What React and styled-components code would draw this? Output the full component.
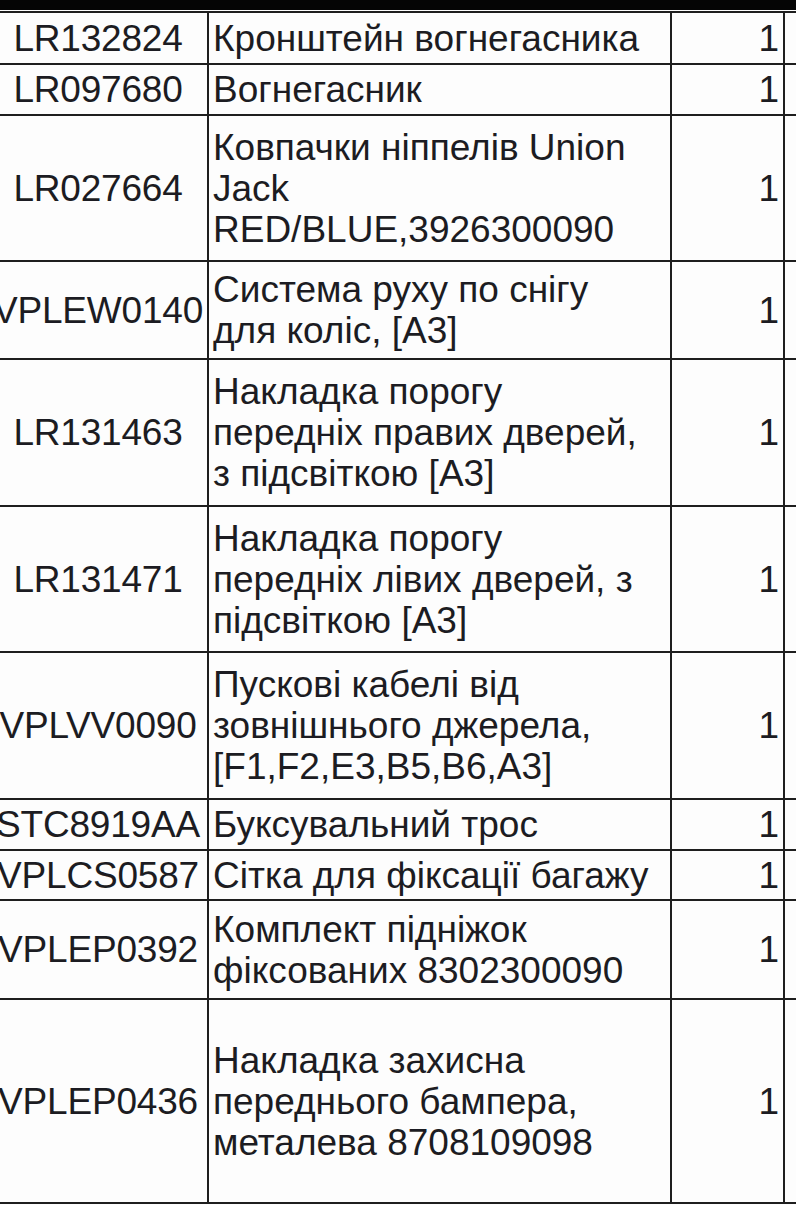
import React from 'react';
import styled, { createGlobalStyle } from 'styled-components';

const GlobalStyle = createGlobalStyle`
  html, body {
    margin: 0;
    padding: 0;
    background: #fdfdfd;
    overflow: hidden;
  }
`;

const columns = [220, 463, 113, 60];

const rows = [
  { code: 'LR132824', lines: ['Кронштейн вогнегасника'], qty: 1, h: 52 },
  { code: 'LR097680', lines: ['Вогнегасник'], qty: 1, h: 51 },
  { code: 'LR027664', lines: ['Ковпачки ніппелів Union', 'Jack', 'RED/BLUE,3926300090'], qty: 1, h: 146 },
  { code: 'VPLEW0140', lines: ['Система руху по снігу', 'для коліс, [A3]'], qty: 1, h: 98 },
  { code: 'LR131463', lines: ['Накладка порогу', 'передніх правих дверей,', 'з підсвіткою [A3]'], qty: 1, h: 147 },
  { code: 'LR131471', lines: ['Накладка порогу', 'передніх лівих дверей, з', 'підсвіткою [A3]'], qty: 1, h: 146 },
  { code: 'VPLVV0090', lines: ['Пускові кабелі від', 'зовнішнього джерела,', '[F1,F2,E3,B5,B6,A3]'], qty: 1, h: 147 },
  { code: 'STC8919AA', lines: ['Буксувальний трос'], qty: 1, h: 51 },
  { code: 'VPLCS0587', lines: ['Сітка для фіксації багажу'], qty: 1, h: 50 },
  { code: 'VPLEP0392', lines: ['Комплект підніжок', 'фіксованих 8302300090'], qty: 1, h: 99 },
  { code: 'VPLEP0436', lines: ['Накладка захисна', 'переднього бампера,', 'металева 8708109098'], qty: 1, h: 204 },
];

export default function App() {
  return (
    <>
      <GlobalStyle />
      <Sheet>
        <TopBar />
        <Grid>
          <colgroup>
            {columns.map((w, i) => (
              <Col key={i} $w={w} />
            ))}
          </colgroup>
          <tbody>
            {rows.map((r) => (
              <Row key={r.code} $h={r.h}>
                <CodeCell>{r.code}</CodeCell>
                <NameCell>
                  {r.lines.map((l, i) => (
                    <Line key={i}>{l}</Line>
                  ))}
                </NameCell>
                <QtyCell>{r.qty}</QtyCell>
                <EmptyCell />
              </Row>
            ))}
          </tbody>
        </Grid>
      </Sheet>
    </>
  );
}

const Sheet = styled.div`
  width: 796px;
  height: 1205px;
  overflow: hidden;
  background: #fdfdfd;
`;

const TopBar = styled.div`
  height: 10px;
  background: #050505;
  margin-bottom: 1px;
`;

const Grid = styled.table`
  border-collapse: collapse;
  table-layout: fixed;
  width: 856px;
  margin-left: -13px;
  font-family: "Liberation Sans", Arial, sans-serif;
  font-size: 37px;
  line-height: 41px;
  color: #1c1c22;
`;

const Col = styled.col`
  width: ${(p) => p.$w}px;
`;

const Row = styled.tr`
  height: ${(p) => p.$h}px;
`;

const Cell = styled.td`
  border: 2px solid #1e1e1e;
  padding: 0 4px;
  vertical-align: middle;
  white-space: nowrap;
  overflow: visible;
`;

const CodeCell = styled(Cell)`
  text-align: center;
  padding: 0;
  letter-spacing: -0.2px;
`;

const NameCell = styled(Cell)`
  text-align: left;
`;

const Line = styled.div``;

const QtyCell = styled(Cell)`
  text-align: right;
`;

const EmptyCell = styled(Cell)``;
